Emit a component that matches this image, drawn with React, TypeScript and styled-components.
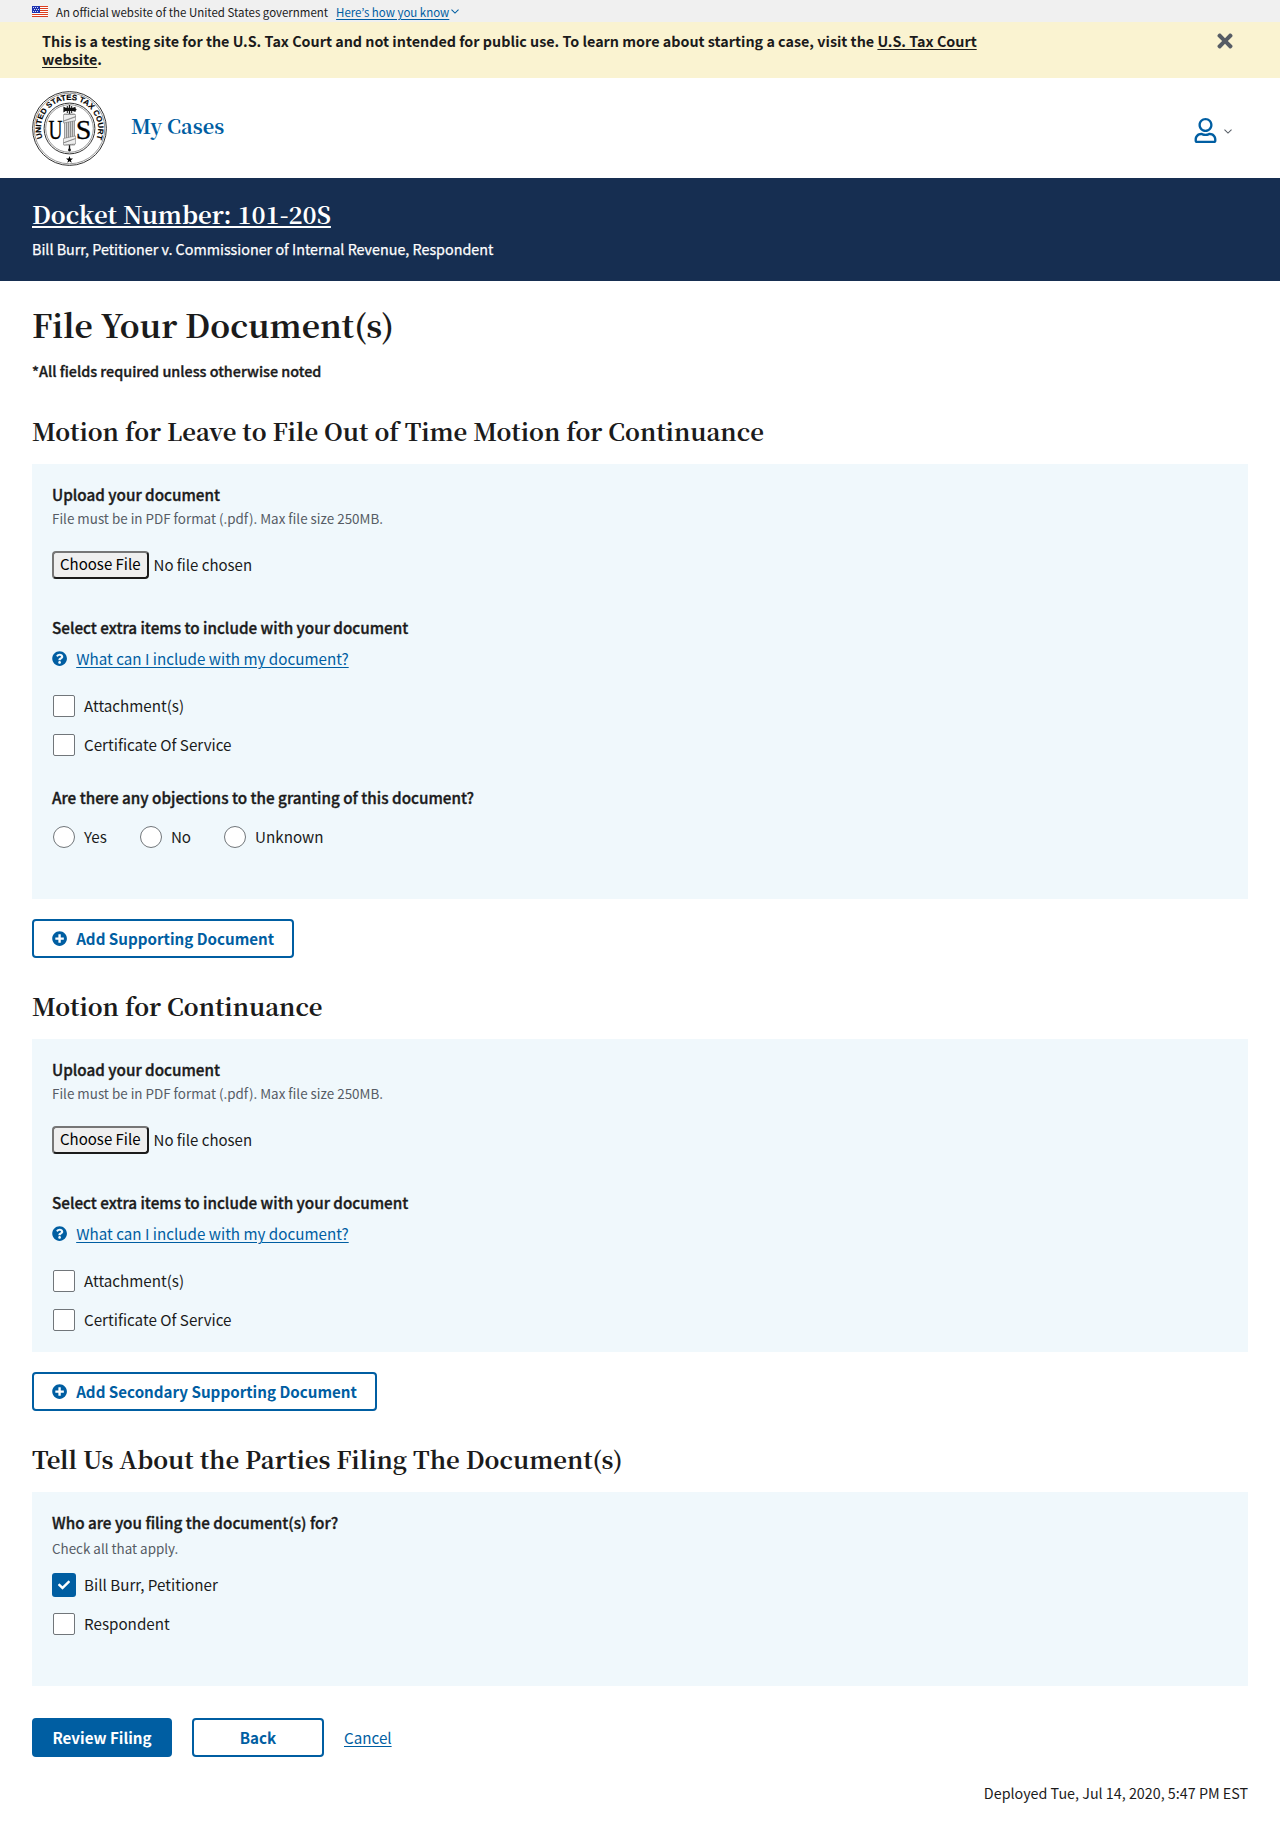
import React from 'react';
import styled, { createGlobalStyle, css } from 'styled-components';
import { FaTimes, FaRegUser, FaQuestionCircle, FaPlusCircle, FaCheck } from 'react-icons/fa';

const color = {
  ink: '#1b1b1b',
  muted: '#565c65',
  primary: '#005ea2',
  navy: '#162e51',
  panel: '#f0f8fc',
  banner: '#f0f0f0',
  warning: '#faf3d1',
  border: '#71767a',
};

const sans = '"Noto Sans CJK KR", "Noto Sans", sans-serif';
const serif = '"Noto Serif CJK SC", "Liberation Serif", serif';

const GlobalStyle = createGlobalStyle`
  *, *::before, *::after { box-sizing: border-box; }
  body {
    margin: 0;
    background: #fff;
    color: ${color.ink};
    font-family: ${sans};
    font-size: 15.2px;
    line-height: 20px;
  }
  h1, h2, p { margin: 0; }
  button { font-family: inherit; }
  svg { display: block; flex: none; }
`;

const semibold = css`
  font-weight: 500;
  -webkit-text-stroke: 0.35px currentColor;
`;

const underline = css`
  text-decoration: underline;
  text-decoration-thickness: 1px;
  text-underline-offset: 2px;
`;

const GovBanner = styled.div`
  display: flex;
  align-items: center;
  height: 22px;
  padding: 1px 32px 0;
  background: ${color.banner};
  font-size: 11.47px;
  line-height: 16px;
`;

const BannerText = styled.span`
  margin-left: 8px;
`;

const BannerLink = styled.a`
  display: flex;
  align-items: center;
  gap: 2px;
  margin-left: 8px;
  color: ${color.primary};
  span { ${underline} }
`;

const Alert = styled.div`
  display: flex;
  justify-content: space-between;
  align-items: flex-start;
  height: 56px;
  padding: 10px 44.5px 0 42px;
  background: ${color.warning};
`;

const AlertText = styled.p`
  width: 952px;
  font-size: 14.33px;
  line-height: 18px;
  font-weight: 700;
  a { ${underline} }
`;

const CloseButton = styled.button`
  padding: 0;
  border: 0;
  margin-top: -2.5px;
  background: none;
  color: ${color.muted};
  font-size: 22px;
`;

const Header = styled.header`
  display: flex;
  align-items: center;
  height: 100px;
  padding: 0 48px 0 32px;
`;

const NavLink = styled.a`
  flex: 1;
  margin: -4px 0 0 24px;
  color: ${color.primary};
  font-family: ${serif};
  font-size: 20px;
  font-weight: 700;
  line-height: 26px;
`;

const AccountMenu = styled.button`
  display: flex;
  align-items: center;
  gap: 6.5px;
  margin-top: 5px;
  padding: 0;
  border: 0;
  background: none;
  color: ${color.primary};
  font-size: 25px;
  svg:last-child { margin-top: 2px; }
`;

const DocketBar = styled.section`
  height: 103px;
  padding: 21px 32px 0;
  background: ${color.navy};
  color: #fff;
`;

const DocketLink = styled.a`
  display: block;
  font-family: ${serif};
  font-size: 23.9px;
  font-weight: 700;
  line-height: 30px;
  text-decoration: underline;
  text-decoration-thickness: 2px;
  text-underline-offset: 2px;
  text-decoration-skip-ink: none;
`;

const Caption = styled.p`
  margin-top: 11px;
  font-size: 14.33px;
  line-height: 18px;
  -webkit-text-stroke: 0.25px #fff;
`;

const Main = styled.main`
  padding: 23px 32px 0;
`;

const PageTitle = styled.h1`
  font-family: ${serif};
  font-size: 31.85px;
  line-height: 40px;
`;

const RequiredNote = styled.p`
  margin: 18px 0 36px;
  font-size: 14.37px;
  line-height: 18px;
  ${semibold}
`;

const SectionTitle = styled.h2`
  margin-bottom: 18px;
  font-family: ${serif};
  font-size: 23.9px;
  line-height: 30px;
`;

const Panel = styled.section<{ $bottom: number }>`
  padding: 20px 20px ${p => p.$bottom}px;
  background: ${color.panel};
`;

const Label = styled.p<{ $top?: number }>`
  margin-top: ${p => p.$top ?? 0}px;
  font-size: 15.27px;
  ${semibold}
`;

const Hint = styled.p<{ $top: number }>`
  margin-top: ${p => p.$top}px;
  color: ${color.muted};
  font-size: 13.42px;
`;

const FileRow = styled.div`
  display: flex;
  gap: 5px;
  height: 28px;
  margin-top: 23px;
  line-height: 24px;
  font-size: 15px;
  span { padding-top: 2px; }
`;

const FileButton = styled.button`
  padding: 0 6px 2px;
  border: 2px solid;
  border-color: #767676 #1b1b1b #1b1b1b #767676;
  border-radius: 4px;
  background: #efefef;
  color: #000;
  font-size: 15px;
  line-height: 22px;
`;

const HelpLink = styled.a`
  display: flex;
  align-items: center;
  gap: 9px;
  margin-top: 11px;
  color: ${color.primary};
  svg { margin-top: 2px; }
  span { ${underline} }
`;

const Options = styled.div<{ $top: number; $inline?: boolean }>`
  display: flex;
  flex-direction: ${p => (p.$inline ? 'row' : 'column')};
  gap: ${p => (p.$inline ? 32 : 17)}px;
  margin-top: ${p => p.$top}px;
`;

const OptionRow = styled.label`
  display: flex;
  align-items: flex-start;
  height: 22px;
  gap: 9px;
  padding-left: 1px;
`;

const Box = styled.span<{ $round?: boolean; $checked?: boolean }>`
  display: flex;
  align-items: center;
  justify-content: center;
  width: 22px;
  height: 22px;
  border: 1px solid ${color.border};
  border-radius: ${p => (p.$round ? '50%' : '2px')};
  background: #fff;
  color: #fff;
  font-size: 12px;
  ${p => p.$checked && css`
    border-color: ${color.primary};
    background: ${color.primary};
    box-shadow: 0 0 0 1px ${color.primary};
  `}
`;

const Button = styled.button<{ $width?: number; $filled?: boolean }>`
  display: flex;
  align-items: center;
  justify-content: center;
  gap: 9px;
  width: ${p => (p.$width ? `${p.$width}px` : 'auto')};
  height: 39px;
  padding: 0 18px 2px;
  border: 2px solid ${color.primary};
  border-radius: 4px;
  background: ${p => (p.$filled ? color.primary : '#fff')};
  color: ${p => (p.$filled ? '#fff' : color.primary)};
  font-size: 15.17px;
  font-weight: 700;
  line-height: 20px;
  white-space: nowrap;
  svg { margin-top: 2px; }
`;

const AddRow = styled.div`
  display: flex;
  padding: 20px 0 33px;
`;

const Actions = styled.div`
  display: flex;
  align-items: center;
  gap: 20px;
  margin-top: 32px;
`;

const CancelLink = styled.a`
  margin-top: -1px;
  color: ${color.primary};
  ${underline}
`;

const Deployed = styled.footer`
  padding: 27px 32px 19px;
  font-size: 14.32px;
  line-height: 18px;
  text-align: right;
`;

const Flag = () => (
  <svg width="16" height="11" viewBox="0 0 16 11" shapeRendering="crispEdges">
    <rect width="16" height="11" fill="#fff" />
    {[0, 2, 4, 6, 8, 10].map(y => (
      <rect key={y} y={y} width="16" height="1" fill="#db3e1f" />
    ))}
    <rect width="8" height="7" fill="#1e33b1" />
    {[[1, 1], [3, 1], [5, 1], [2, 3], [4, 3], [6, 3], [1, 5], [3, 5], [5, 5]].map(([x, y]) => (
      <rect key={`${x}-${y}`} x={x} y={y} width="1" height="1" fill="#d5daf3" />
    ))}
  </svg>
);

const Chevron = ({ width, stroke }: { width: number; stroke: string }) => (
  <svg width={width} height={width * 0.6} viewBox="0 0 10 6" fill="none" stroke={stroke} strokeWidth="1.3">
    <path d="M.6.7 5 5 9.4.7" />
  </svg>
);

const Seal = () => (
  <svg width="75" height="75" viewBox="0 0 75 75">
    <defs>
      <path id="seal-arc" d="M10.6 47.2A28.6 28.6 0 1 1 64.4 47.2" />
    </defs>
    <g fill="none" stroke="#333">
      <circle cx="37.5" cy="37.5" r="36.9" strokeWidth="1" />
      <circle cx="37.5" cy="37.5" r="35.3" strokeWidth=".5" />
      <circle cx="37.5" cy="37.5" r="25.4" strokeWidth="1" />
      <circle cx="37.5" cy="37.5" r="23.8" strokeWidth=".5" />
    </g>
    <text fontFamily="Liberation Sans, sans-serif" fontWeight="700" fontSize="7.7" fill="#000" stroke="#000" strokeWidth=".15">
      <textPath href="#seal-arc" textLength="110" lengthAdjust="spacingAndGlyphs">UNITED STATES TAX COURT</textPath>
    </text>
    <g fontFamily="Liberation Serif, serif" fontSize="28" fill="#000" stroke="#000" strokeWidth=".3">
      <text x="16.4" y="47.6" textLength="14" lengthAdjust="spacingAndGlyphs">U</text>
      <text x="43.8" y="47.6" textLength="15.6" lengthAdjust="spacingAndGlyphs">S</text>
    </g>
    <path d="M37.5 14v9M37.5 54v6" stroke="#111" strokeWidth="1.3" />
    <path d="M31.4 15.6l2.3 1.2h7.2l2.6-1v1.4l1.2 1.4-1.2 1.4v1l-2.6-.9h-7.2l-2.3 1.3z" fill="#111" />
    <path d="M35.3 15v7M39.7 15v7" stroke="#111" strokeWidth="1" />
    <rect x="32.6" y="23" width="9.9" height="31" fill="#d9d9d9" stroke="#777" strokeWidth=".7" />
    <path d="M34.6 23v31M36.6 23v31M38.6 23v31M40.6 23v31" stroke="#666" strokeWidth=".7" />
    <path d="M31.5 23.5h12v2.4l-12 4.4zM31.5 32v-2.2l12-4.2v4zM31.5 47.5l12-2.6v2.6l-12 4.4zM31.5 54v-2.2l12-4.2v5.4z" fill="#eee" stroke="#666" strokeWidth=".5" />
    <circle cx="37.5" cy="59" r="1.4" fill="#111" />
    <path d="M37.5 65.1l.9 2.5h2.6l-2.1 1.6.8 2.5-2.2-1.5-2.2 1.5.8-2.5-2.1-1.6h2.6z" fill="#000" />
  </svg>
);

const Option = ({ text, round, checked }: { text: string; round?: boolean; checked?: boolean }) => (
  <OptionRow>
    <Box $round={round} $checked={checked}>{checked && <FaCheck />}</Box>
    {text}
  </OptionRow>
);

const UploadFields = () => (
  <>
    <Label>Upload your document</Label>
    <Hint $top={4}>File must be in PDF format (.pdf). Max file size 250MB.</Hint>
    <FileRow>
      <FileButton type="button">Choose File</FileButton>
      <span>No file chosen</span>
    </FileRow>
    <Label $top={38}>Select extra items to include with your document</Label>
    <HelpLink>
      <FaQuestionCircle />
      <span>What can I include with my document?</span>
    </HelpLink>
    <Options $top={27}>
      <Option text="Attachment(s)" />
      <Option text="Certificate Of Service" />
    </Options>
  </>
);

const AddButton = ({ text }: { text: string }) => (
  <AddRow>
    <Button type="button">
      <FaPlusCircle />
      {text}
    </Button>
  </AddRow>
);

export default function App() {
  return (
    <>
      <GlobalStyle />
      <GovBanner>
        <Flag />
        <BannerText>An official website of the United States government</BannerText>
        <BannerLink>
          <span>Here’s how you know</span>
          <Chevron width={8} stroke={color.primary} />
        </BannerLink>
      </GovBanner>
      <Alert>
        <AlertText>
          This is a testing site for the U.S. Tax Court and not intended for public use. To learn more
          about starting a case, visit the <a>U.S. Tax Court website</a>.
        </AlertText>
        <CloseButton type="button" aria-label="Close"><FaTimes /></CloseButton>
      </Alert>
      <Header>
        <Seal />
        <NavLink>My Cases</NavLink>
        <AccountMenu type="button" aria-label="Account">
          <FaRegUser />
          <Chevron width={8} stroke={color.muted} />
        </AccountMenu>
      </Header>
      <DocketBar>
        <DocketLink>Docket Number: 101-20S</DocketLink>
        <Caption>Bill Burr, Petitioner v. Commissioner of Internal Revenue, Respondent</Caption>
      </DocketBar>
      <Main>
        <PageTitle>File Your Document(s)</PageTitle>
        <RequiredNote>*All fields required unless otherwise noted</RequiredNote>

        <SectionTitle>Motion for Leave to File Out of Time Motion for Continuance</SectionTitle>
        <Panel $bottom={51}>
          <UploadFields />
          <Label $top={31}>Are there any objections to the granting of this document?</Label>
          <Options $top={19} $inline>
            <Option text="Yes" round />
            <Option text="No" round />
            <Option text="Unknown" round />
          </Options>
        </Panel>
        <AddButton text="Add Supporting Document" />

        <SectionTitle>Motion for Continuance</SectionTitle>
        <Panel $bottom={21}>
          <UploadFields />
        </Panel>
        <AddButton text="Add Secondary Supporting Document" />

        <SectionTitle>Tell Us About the Parties Filing The Document(s)</SectionTitle>
        <Panel $bottom={51}>
          <Label>Who are you filing the document(s) for?</Label>
          <Hint $top={6}>Check all that apply.</Hint>
          <Options $top={16}>
            <Option text="Bill Burr, Petitioner" checked />
            <Option text="Respondent" />
          </Options>
        </Panel>

        <Actions>
          <Button type="button" $width={140} $filled>Review Filing</Button>
          <Button type="button" $width={132}>Back</Button>
          <CancelLink>Cancel</CancelLink>
        </Actions>
      </Main>
      <Deployed>Deployed Tue, Jul 14, 2020, 5:47 PM EST</Deployed>
    </>
  );
}
